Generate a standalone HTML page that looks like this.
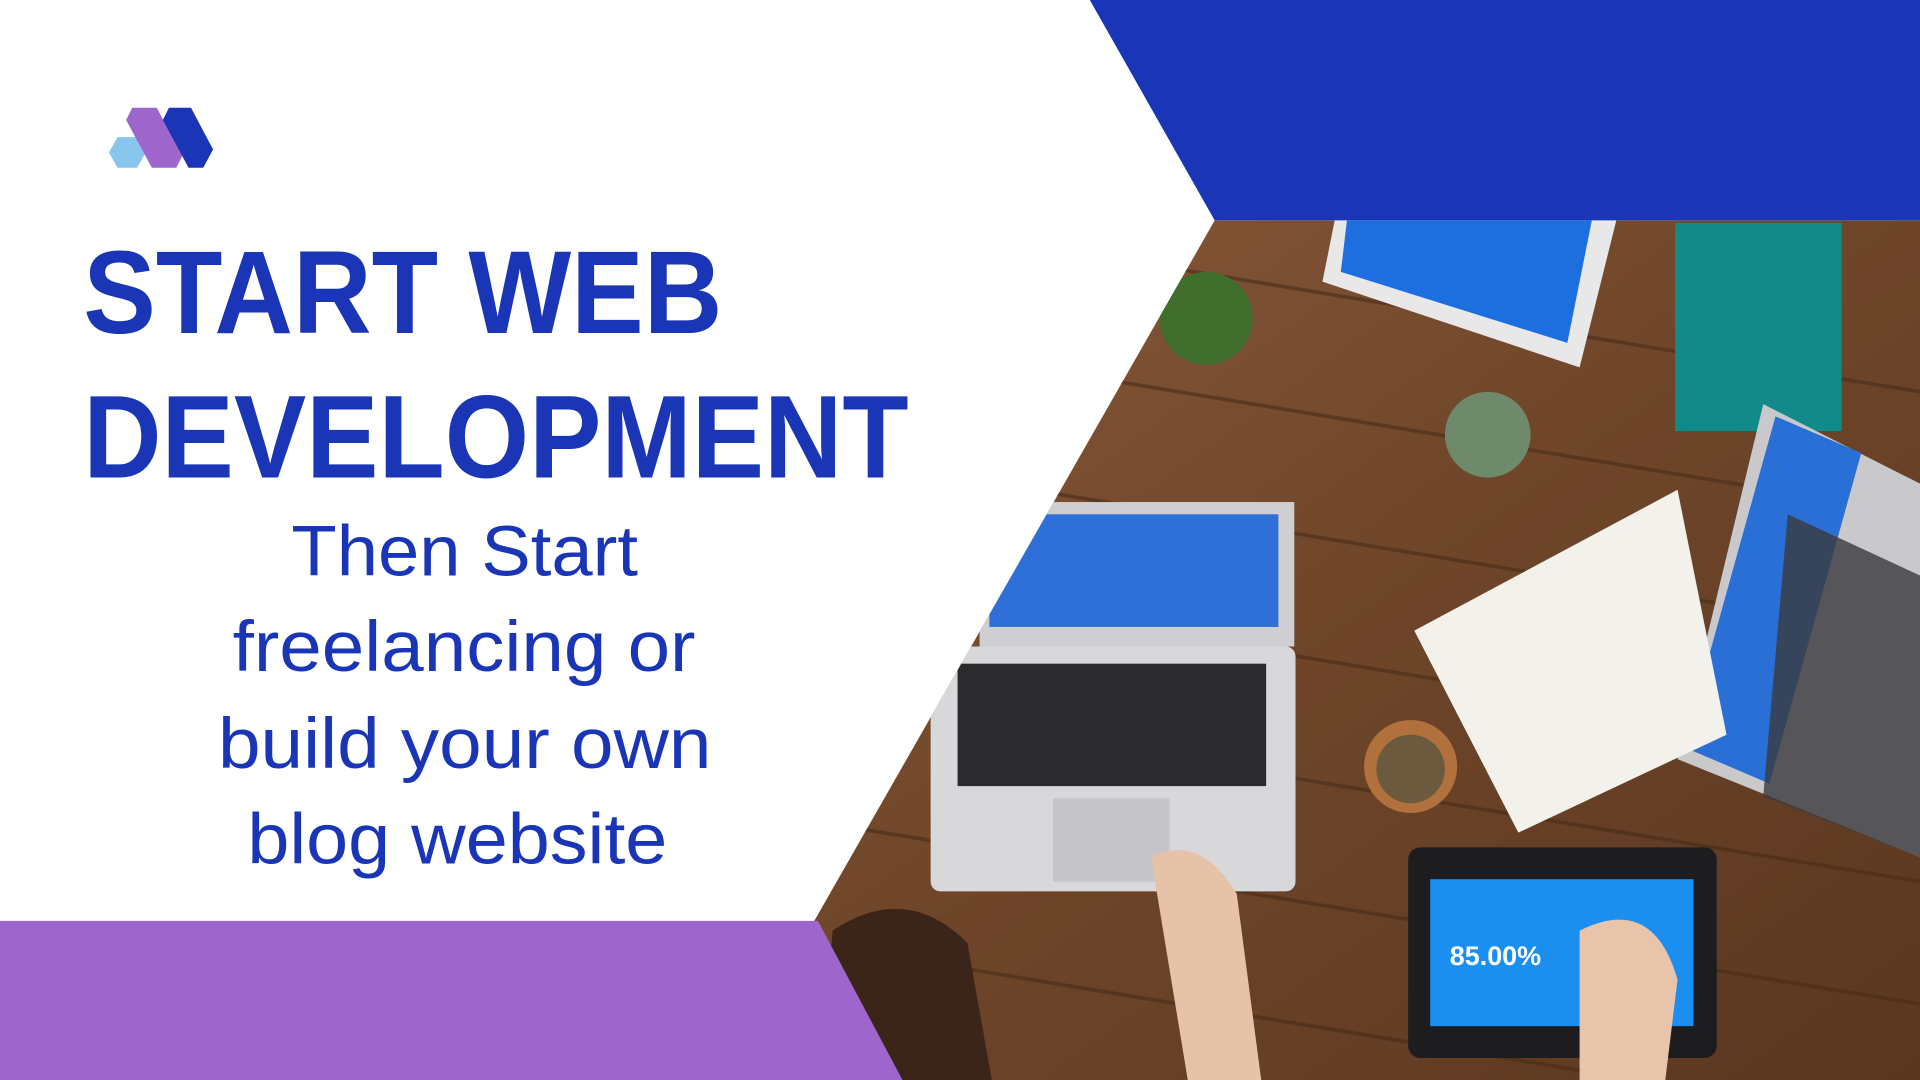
<!DOCTYPE html>
<html><head><meta charset="utf-8"><style>
html,body{margin:0;padding:0;width:1920px;height:1080px;overflow:hidden;background:#fff}
svg{display:block}
</style></head><body>
<svg width="1920" height="1080" viewBox="0 0 1568 882" xmlns="http://www.w3.org/2000/svg">
<defs>
<clipPath id="ph"><polygon points="992,180 1568,180 1568,882 600,882 665,752"/></clipPath>
<linearGradient id="wood" x1="0" y1="0" x2="1" y2="1">
<stop offset="0" stop-color="#8a5a3a"/><stop offset="0.5" stop-color="#6e4529"/><stop offset="1" stop-color="#5a3720"/>
</linearGradient>
</defs>
<rect width="1568" height="882" fill="#fff"/>
<polygon points="890,0 1568,0 1568,180 992,180" fill="#1a36b7"/>
<g clip-path="url(#ph)">
<rect x="600" y="180" width="968" height="702" fill="url(#wood)"/>
<g stroke="#4a2c18" stroke-width="3" opacity="0.6">
<line x1="600" y1="260" x2="1568" y2="420"/><line x1="600" y1="360" x2="1568" y2="520"/>
<line x1="600" y1="460" x2="1568" y2="620"/><line x1="600" y1="560" x2="1568" y2="720"/>
<line x1="600" y1="660" x2="1568" y2="820"/><line x1="600" y1="760" x2="1568" y2="920"/>
<line x1="600" y1="160" x2="1568" y2="320"/>
</g>
<polygon points="1090,180 1320,180 1290,300 1080,230" fill="#e8e8e8"/>
<polygon points="1100,180 1300,180 1280,280 1095,222" fill="#1d6fe0"/>
<rect x="1368" y="182" width="136" height="170" fill="#138a8a"/>
<polygon points="1440,330 1568,395 1568,700 1370,620" fill="#c9c9cc"/>
<polygon points="1450,340 1520,370 1445,640 1375,610" fill="#2a6fd6"/>
<polygon points="1460,420 1568,470 1568,700 1440,650" fill="#3a3a3d" opacity="0.8"/>
<rect x="800" y="410" width="257" height="118" fill="#cfcfd2"/>
<rect x="808" y="420" width="236" height="92" fill="#2e6fd8"/>
<rect x="760" y="528" width="298" height="200" rx="8" fill="#d8d8da"/>
<rect x="782" y="542" width="252" height="100" fill="#2b2b2e"/>
<rect x="860" y="652" width="95" height="68" fill="#c5c5c8"/>
<polygon points="1155,515 1370,400 1410,600 1240,680" fill="#f3f1ec"/>
<circle cx="1152" cy="626" r="38" fill="#b0713d"/><circle cx="1152" cy="628" r="28" fill="#6b5a3e"/>
<circle cx="1215" cy="355" r="35" fill="#6f8a6a"/>
<circle cx="985" cy="260" r="38" fill="#3f6d2c"/>
<rect x="1150" y="692" width="252" height="172" rx="10" fill="#1d1d1f"/>
<rect x="1168" y="718" width="215" height="120" fill="#1a8ff0"/>
<text x="1184" y="788" font-family="Liberation Sans, sans-serif" font-weight="bold" font-size="22" fill="#fff">85.00%</text>
<path d="M680,760 q60,-40 110,10 l20,112 h-140 z" fill="#3b2418"/>
<path d="M940,700 q40,-20 70,30 l20,152 h-60 z" fill="#e5c2a8"/>
<path d="M1290,760 q60,-30 80,40 l-10,82 h-70 z" fill="#e8c4aa"/>
</g>
<polygon points="0,752 668,752 737,882 0,882" fill="#9e66cc"/>
<g>
<polygon points="96,112 112,112 119,124.5 112,137 96,137 89,124.5" fill="#89c6ee"/>
<polygon points="103,98 108,88 128,88 149,127 144,137 124,137" fill="#9e66cc"/>
<polygon points="133,98 138,88 156,88 174,122 166,137 154,137" fill="#1a36b7"/>
</g>
<g font-family="Liberation Sans, sans-serif" fill="#1a36b7">
<text x="68" y="272" font-weight="bold" font-size="96" textLength="522" lengthAdjust="spacingAndGlyphs">START WEB</text>
<text x="68" y="390" font-weight="bold" font-size="96" textLength="674" lengthAdjust="spacingAndGlyphs">DEVELOPMENT</text>
<g font-size="58" lengthAdjust="spacingAndGlyphs">
<text x="238" y="470" textLength="283" lengthAdjust="spacingAndGlyphs">Then Start</text>
<text x="190" y="548" textLength="378" lengthAdjust="spacingAndGlyphs">freelancing or</text>
<text x="178" y="627" textLength="403" lengthAdjust="spacingAndGlyphs">build your own</text>
<text x="202" y="705" textLength="343" lengthAdjust="spacingAndGlyphs">blog website</text>
</g>
</g>
</svg>
</body></html>
